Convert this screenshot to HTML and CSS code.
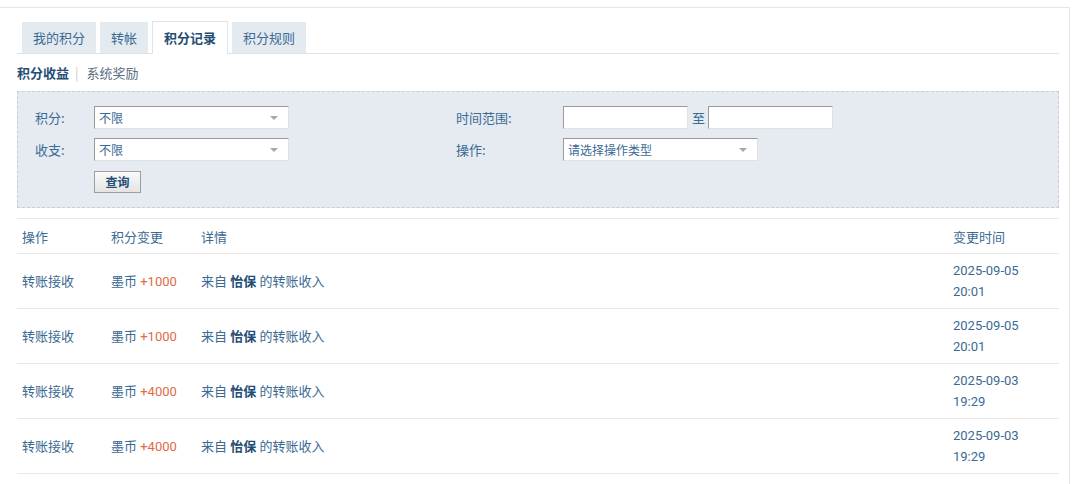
FILE: index.html
```html
<!DOCTYPE html>
<html lang="zh-CN">
<head>
<meta charset="utf-8">
<title>积分记录</title>
<link rel="stylesheet" href="styles.css">
</head>
<body>
<div class="page">
  <ul class="tabs">
    <li class="tab">我的积分</li>
    <li class="tab">转帐</li>
    <li class="tab active">积分记录</li>
    <li class="tab">积分规则</li>
  </ul>
  <div class="subnav">
    <span class="sub-active">积分收益</span><span class="pipe">|</span><span class="sub-link">系统奖励</span>
  </div>
  <div class="filter">
    <div class="label">积分:</div>
    <div class="ctrl"><div class="select w194"><span>不限</span><i class="arrow"></i></div></div>
    <div class="label">时间范围:</div>
    <div class="ctrl range"><div class="input"></div><span class="to">至</span><div class="input"></div></div>

    <div class="label">收支:</div>
    <div class="ctrl"><div class="select w194"><span>不限</span><i class="arrow"></i></div></div>
    <div class="label">操作:</div>
    <div class="ctrl"><div class="select w194"><span>请选择操作类型</span><i class="arrow"></i></div></div>

    <div class="label"></div>
    <div class="ctrl"><button class="btn">查询</button></div>
  </div>
  <table class="records">
    <thead>
      <tr><th class="c1">操作</th><th class="c2">积分变更</th><th class="c3">详情</th><th class="c4">变更时间</th></tr>
    </thead>
    <tbody>
      <tr><td>转账接收</td><td>墨币 <span class="plus">+1000</span></td><td>来自 <b>怡保</b> 的转账收入</td><td>2025-09-05<br>20:01</td></tr>
      <tr><td>转账接收</td><td>墨币 <span class="plus">+1000</span></td><td>来自 <b>怡保</b> 的转账收入</td><td>2025-09-05<br>20:01</td></tr>
      <tr><td>转账接收</td><td>墨币 <span class="plus">+4000</span></td><td>来自 <b>怡保</b> 的转账收入</td><td>2025-09-03<br>19:29</td></tr>
      <tr><td>转账接收</td><td>墨币 <span class="plus">+4000</span></td><td>来自 <b>怡保</b> 的转账收入</td><td>2025-09-03<br>19:29</td></tr>
    </tbody>
  </table>
</div>
</body>
</html>
```
FILE: styles.css
```css
html, body {
  margin: 0;
  padding: 0;
  background: #fff;
}
body {
  font-family: Roboto, "Noto Sans CJK SC", sans-serif;
  font-size: 13px;
  color: #3b6a93;
}
.page {
  margin-top: 7px;
  width: 1042px;
  border-top: 1px solid #e6e6e6;
  border-right: 1px solid #e6e6e6;
  padding: 14px 10px 20px 17px;
}
.tabs {
  list-style: none;
  margin: 0;
  padding: 0 0 0 5px;
  display: flex;
  gap: 4px;
  border-bottom: 1px solid #dde3e8;
  height: 31px;
}
.tab {
  height: 31px;
  line-height: 31px;
  padding: 0 11px;
  background: #e3eaf0;
  color: #3b6a93;
  font-family: "Noto Sans CJK SC", sans-serif;
  font-size: 13px;
}
.tab.active {
  background: #fff;
  border: 1px solid #dde3e8;
  border-bottom: none;
  line-height: 31px;
  margin-top: -1px;
  padding: 0 11px;
  font-weight: bold;
  color: #234d73;
  box-sizing: border-box;
  height: 33px;
}
.subnav {
  height: 37px;
  line-height: 37px;
  font-family: "Noto Sans CJK SC", sans-serif;
  font-size: 13px;
}
.sub-active {
  font-weight: bold;
  color: #234d73;
}
.pipe {
  color: #ccc;
  margin: 0 8px 0 6px;
}
.sub-link {
  color: #5b6e80;
}
.filter {
  background: #e5ebf1;
  border: 1px dashed #c9ced3;
  padding: 14px 0 14px 17px;
  display: grid;
  grid-template-columns: 59px 362px 107px 1fr;
  row-gap: 9px;
  font-family: "Noto Sans CJK SC", sans-serif;
  font-size: 12px;
}
.label {
  height: 23px;
  line-height: 23px;
  color: #3b6a93;
  font-size: 13px;
}
.ctrl {
  display: flex;
  align-items: center;
}
.select, .input {
  height: 23px;
  box-sizing: border-box;
  background: #fff;
  border-top: 1px solid #9a9a9a;
  border-left: 1px solid #9a9a9a;
  border-right: 1px solid #dfe3e6;
  border-bottom: 1px solid #dfe3e6;
}
.select {
  display: flex;
  align-items: center;
  justify-content: space-between;
  padding: 0 10px 0 4px;
  color: #3b6a93;
  line-height: 21px;
}
.w194 { width: 195px; }
.arrow {
  width: 0;
  height: 0;
  border-left: 4px solid transparent;
  border-right: 4px solid transparent;
  border-top: 4px solid #a8a8a8;
}
.input { width: 125px; }
.to {
  padding: 0 3px 0 4px;
  color: #3b6a93;
  font-size: 13px;
}
.btn {
  width: 47px;
  height: 22px;
  padding: 0;
  margin: 0;
  border: 1px solid #9e9e9e;
  background: linear-gradient(#fafafa, #e4e4e4);
  color: #234d73;
  font-family: "Noto Sans CJK SC", sans-serif;
  font-size: 12px;
  font-weight: bold;
  line-height: 20px;
}
.records {
  margin-top: 10px;
  width: 100%;
  border-collapse: collapse;
  border-top: 1px solid #e8e8e8;
}
.records th {
  font-weight: normal;
  text-align: left;
  height: 34px;
  padding: 0 0 0 5px;
  border-bottom: 1px solid #e8e8e8;
  vertical-align: middle;
}
.records td {
  height: 54px;
  padding: 0 0 0 5px;
  border-bottom: 1px solid #e8e8e8;
  vertical-align: middle;
  line-height: 21px;
}
.c1 { width: 84px; }
.c2 { width: 85px; }
.c4 { width: 106px; }
.records b {
  color: #234d73;
  font-weight: bold;
}
.plus {
  color: #e06b48;
}
```
